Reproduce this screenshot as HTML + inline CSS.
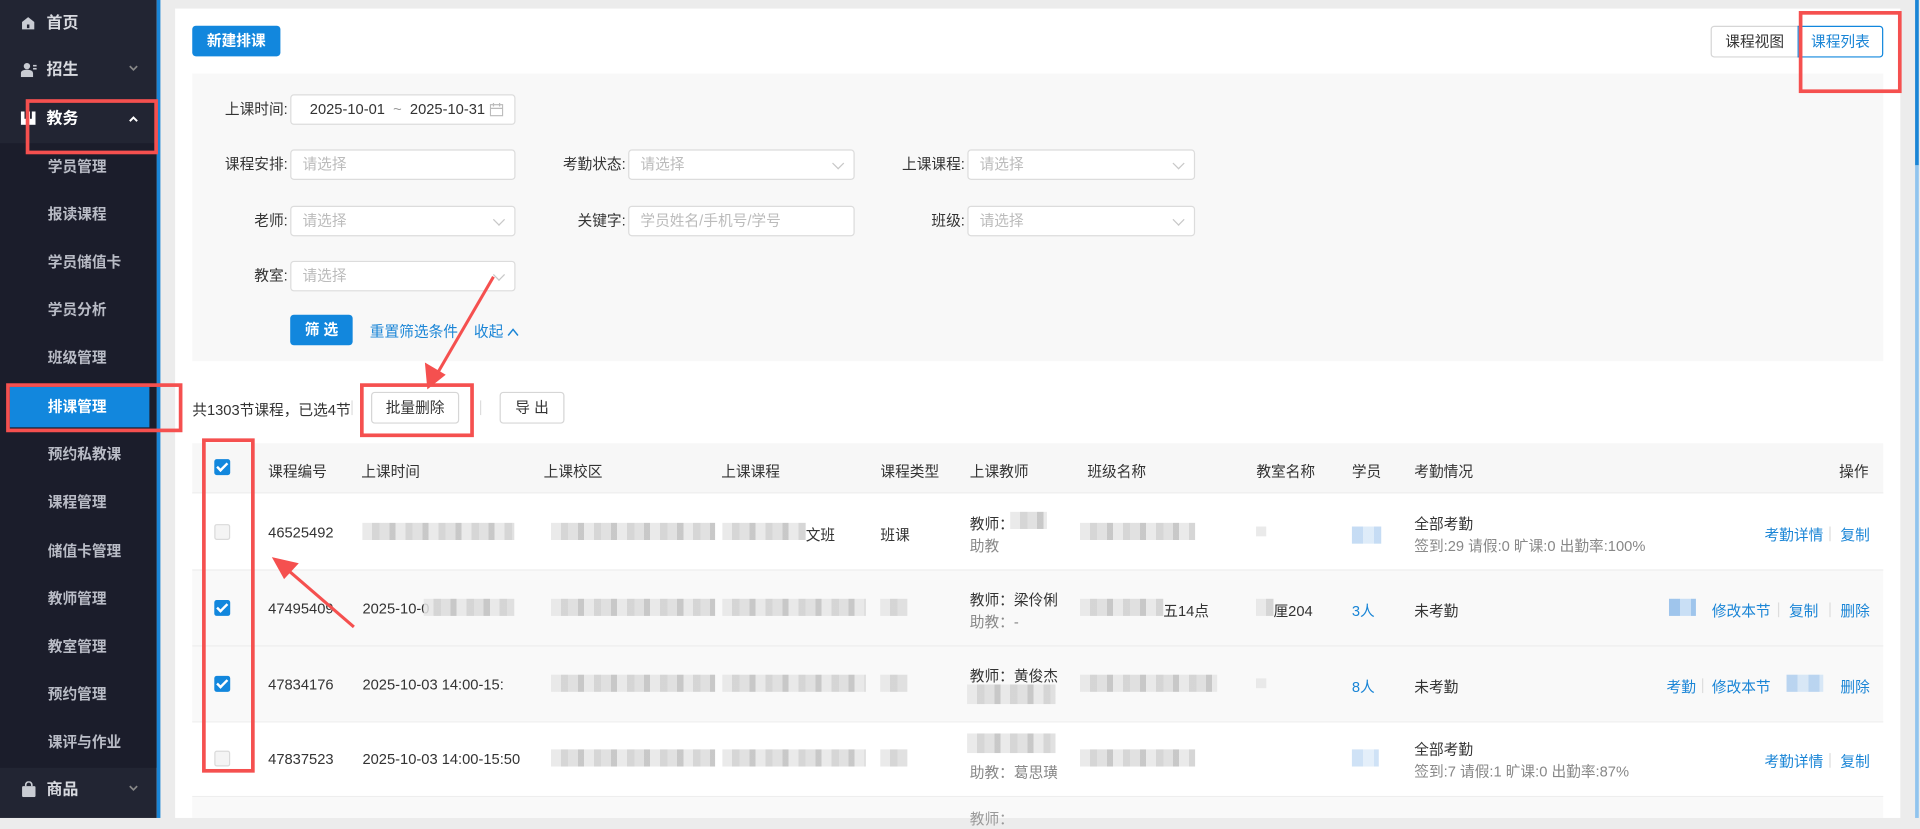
<!DOCTYPE html>
<html><head><meta charset="utf-8"><style>
*{margin:0;padding:0;box-sizing:border-box}
html,body{width:1920px;height:818px;overflow:hidden;background:#ececec}
#w{position:absolute;left:0;top:0;width:1568px;height:668px;transform:scale(1.22449);transform-origin:0 0;font-family:"Liberation Sans","Noto Sans CJK SC",sans-serif;font-size:12px;color:#333}
.a{position:absolute}
.side{left:0;top:0;width:128px;height:668px;background:#222533}
.sub{left:0;top:117px;width:128px;height:510px;background:#1b1d2b}
.mi{position:absolute;left:38px;color:#d8dae0;font-size:13px;font-weight:bold;line-height:16px}
.si{position:absolute;left:39px;color:#b9bcc6;font-size:12px;font-weight:bold;line-height:16px}
.red{position:absolute;border:3px solid #f5504f}
.inp{position:absolute;background:#fff;border:1px solid #dcdcdc;border-radius:3px;height:25px;color:#bbb;font-size:12px;line-height:23px;padding-left:9px}
.inp .ar{position:absolute;right:9px;top:7px;width:7px;height:7px;border-right:1px solid #c8c8c8;border-bottom:1px solid #c8c8c8;transform:rotate(45deg)}
.lb{position:absolute;font-size:12px;color:#333;text-align:right;line-height:25px}
.btn{position:absolute;background:#fff;border:1px solid #d6d6d6;border-radius:3px;text-align:center;font-size:12px;line-height:24px;color:#333}
.cb{position:absolute;left:175px;width:13px;height:13px;border-radius:2px}
.cb.on{background:#1287dd}
.cb.on:after{content:"";position:absolute;left:4px;top:1px;width:3px;height:7px;border:solid #fff;border-width:0 2px 2px 0;transform:rotate(45deg)}
.cb.off{background:#f4f4f4;border:1px solid #dadada}
.th{position:absolute;top:376px;font-size:12px;color:#333}
.t{position:absolute;font-size:12px;color:#333;white-space:nowrap}
.g{color:#888}
.bl{color:#1a85d6}
.bz{position:absolute;height:14px;background:repeating-linear-gradient(90deg,#e6e6e6 0 8px,#cfcfcf 8px 14px,#dcdcdc 14px 22px,#bfbfbf 22px 27px);opacity:.85}
.bb{position:absolute;height:14px;background:repeating-linear-gradient(90deg,#9fc5ec 0 9px,#c9dff5 9px 18px)}
.sep{position:absolute;width:1px;height:12px;background:#ddd}
</style></head><body><div id="w">
<div class="a side"></div><div class="a sub"></div>
<div class="a" style="left:128px;top:0;width:3px;height:668px;background:#1a85d6"></div>
<div class="a" style="left:143px;top:7px;width:1409px;height:661px;background:#fff"></div>
<div class="a" style="left:1552px;top:0;width:12px;height:668px;background:#ececec"></div>
<div class="a" style="left:1564px;top:0;width:3px;height:135px;background:#1a85d6"></div>
<div class="a" style="left:1564px;top:135px;width:3px;height:533px;background:#90c4ee"></div>

<!-- sidebar -->
<svg class="a" style="left:17px;top:13px" width="12" height="12" viewBox="0 0 12 12"><path d="M1 5L6 1l5 4v6H1z" fill="#c9ccd3"/><rect x="5" y="7" width="2" height="3" fill="#222533"/></svg>
<div class="mi" style="top:11px">首页</div>
<svg class="a" style="left:17px;top:51px" width="13" height="12" viewBox="0 0 13 12"><circle cx="5" cy="3" r="2.6" fill="#c9ccd3"/><path d="M0 12v-3c0-2 2-3 5-3s5 1 5 3v3z" fill="#c9ccd3"/><rect x="10" y="2" width="3" height="1.3" fill="#c9ccd3"/><rect x="10" y="4.5" width="3" height="1.3" fill="#c9ccd3"/></svg>
<div class="mi" style="top:49px">招生</div>
<svg class="a" style="left:105px;top:53px" width="8" height="6"><path d="M1 1l3 3 3-3" stroke="#888" stroke-width="1.4" fill="none"/></svg>
<svg class="a" style="left:17px;top:91px" width="12" height="11"><rect x="0" y="0" width="12" height="11" fill="#fff"/><rect x="3" y="0" width="1.5" height="6" fill="#222533"/><rect x="7.5" y="0" width="1.5" height="6" fill="#222533"/></svg>
<div class="mi" style="top:89px;color:#fff">教务</div>
<svg class="a" style="left:105px;top:94px" width="8" height="6"><path d="M1 5l3-3 3 3" stroke="#fff" stroke-width="1.6" fill="none"/></svg>
<div class="si" style="top:128px">学员管理</div>
<div class="si" style="top:167px">报读课程</div>
<div class="si" style="top:206px">学员储值卡</div>
<div class="si" style="top:245px">学员分析</div>
<div class="si" style="top:284px">班级管理</div>
<div class="a" style="left:8px;top:316px;width:114px;height:33px;background:#1287dd"></div>
<div class="si" style="top:324px;color:#fff">排课管理</div>
<div class="si" style="top:363px">预约私教课</div>
<div class="si" style="top:402px">课程管理</div>
<div class="si" style="top:442px">储值卡管理</div>
<div class="si" style="top:481px">教师管理</div>
<div class="si" style="top:520px">教室管理</div>
<div class="si" style="top:559px">预约管理</div>
<div class="si" style="top:598px">课评与作业</div>
<svg class="a" style="left:18px;top:638px" width="11" height="13"><path d="M3 4V3a2.5 2.5 0 015 0v1" stroke="#c9ccd3" stroke-width="1.3" fill="none"/><rect x="0" y="4" width="11" height="9" rx="1" fill="#c9ccd3"/></svg>
<div class="mi" style="top:637px">商品</div>
<svg class="a" style="left:105px;top:641px" width="8" height="6"><path d="M1 1l3 3 3-3" stroke="#888" stroke-width="1.4" fill="none"/></svg>

<!-- top -->
<div class="a" style="left:157px;top:21px;width:72px;height:25px;background:#1287dd;border-radius:3px;color:#fff;font-weight:bold;text-align:center;line-height:25px">新建排课</div>
<div class="btn" style="left:1397px;top:21px;width:72px;height:26px;border-radius:3px 0 0 3px">课程视图</div>
<div class="btn" style="left:1468px;top:21px;width:70px;height:26px;border-color:#1287dd;color:#1a85d6;border-radius:0 3px 3px 0">课程列表</div>

<!-- filter -->
<div class="a" style="left:157px;top:60px;width:1381px;height:235px;background:#f8f8f8"></div>
<div class="lb" style="left:160px;top:77px;width:75px">上课时间:</div>
<div class="inp" style="left:237px;top:77px;width:184px;color:#333;padding-left:15px">2025-10-01 &nbsp;<span style="color:#999">~</span>&nbsp; 2025-10-31
<svg class="a" style="right:9px;top:6px" width="11" height="11"><rect x=".5" y="1.5" width="10" height="9" fill="none" stroke="#bbb"/><path d="M.5 4.5h10M3 0v3M8 0v3" stroke="#bbb"/></svg></div>
<div class="lb" style="left:160px;top:122px;width:75px">课程安排:</div>
<div class="inp" style="left:237px;top:122px;width:184px">请选择</div>
<div class="lb" style="left:430px;top:122px;width:81px">考勤状态:</div>
<div class="inp" style="left:513px;top:122px;width:185px">请选择<span class="ar"></span></div>
<div class="lb" style="left:707px;top:122px;width:81px">上课课程:</div>
<div class="inp" style="left:790px;top:122px;width:186px">请选择<span class="ar"></span></div>
<div class="lb" style="left:160px;top:168px;width:75px">老师:</div>
<div class="inp" style="left:237px;top:168px;width:184px">请选择<span class="ar"></span></div>
<div class="lb" style="left:430px;top:168px;width:81px">关键字:</div>
<div class="inp" style="left:513px;top:168px;width:185px">学员姓名/手机号/学号</div>
<div class="lb" style="left:707px;top:168px;width:81px">班级:</div>
<div class="inp" style="left:790px;top:168px;width:186px">请选择<span class="ar"></span></div>
<div class="lb" style="left:160px;top:213px;width:75px">教室:</div>
<div class="inp" style="left:237px;top:213px;width:184px">请选择<span class="ar"></span></div>
<div class="a" style="left:237px;top:257px;width:51px;height:25px;background:#1287dd;border-radius:3px;color:#fff;font-weight:bold;text-align:center;line-height:25px">筛 选</div>
<div class="t bl" style="left:302px;top:262px">重置筛选条件</div>
<div class="t bl" style="left:387px;top:262px">收起 <svg width="10" height="7"><path d="M1 6l4-5 4 5" stroke="#1a85d6" stroke-width="1.2" fill="none"/></svg></div>

<!-- toolbar -->
<div class="t" style="left:157px;top:326px">共1303节课程，已选4节</div>
<div class="sep" style="left:287px;top:327px"></div>
<div class="btn" style="left:303px;top:320px;width:72px;height:26px">批量删除</div>
<div class="sep" style="left:392px;top:327px"></div>
<div class="btn" style="left:408px;top:320px;width:53px;height:26px">导 出</div>

<!-- table -->
<div class="a" style="left:157px;top:362px;width:1381px;height:41px;background:#f7f7f7;border-bottom:1px solid #eee"></div>
<div class="a" style="left:157px;top:465px;width:1381px;height:124px;background:#f9f9f9"></div>
<div class="a" style="left:157px;top:465px;width:1381px;height:1px;background:#eee"></div>
<div class="a" style="left:157px;top:527px;width:1381px;height:1px;background:#eee"></div>
<div class="a" style="left:157px;top:589px;width:1381px;height:1px;background:#eee"></div>
<div class="a" style="left:157px;top:650px;width:1381px;height:1px;background:#eee"></div>
<div class="a" style="left:157px;top:651px;width:1381px;height:17px;background:#f9f9f9"></div>
<div class="cb on" style="top:375px"></div>
<div class="th" style="left:219px">课程编号</div><div class="th" style="left:295px">上课时间</div><div class="th" style="left:444px">上课校区</div><div class="th" style="left:589px">上课课程</div><div class="th" style="left:719px">课程类型</div><div class="th" style="left:792px">上课教师</div><div class="th" style="left:888px">班级名称</div><div class="th" style="left:1026px">教室名称</div><div class="th" style="left:1104px">学员</div><div class="th" style="left:1155px">考勤情况</div><div class="th" style="left:1502px">操作</div>

<!-- row1 -->
<div class="cb off" style="top:428px"></div>
<div class="t" style="left:219px;top:428px">46525492</div>
<div class="bz" style="left:296px;top:427px;width:124px"></div>
<div class="bz" style="left:450px;top:427px;width:134px"></div>
<div class="bz" style="left:590px;top:427px;width:68px"></div><div class="t" style="left:658px;top:428px">文班</div>
<div class="t" style="left:719px;top:428px">班课</div>
<div class="t" style="left:792px;top:419px">教师：</div><div class="bz" style="left:825px;top:418px;width:30px"></div>
<div class="t g" style="left:792px;top:437px">助教</div>
<div class="bz" style="left:882px;top:427px;width:94px"></div>
<div class="bz" style="left:1026px;top:430px;width:8px;height:8px"></div>
<div class="bb" style="left:1104px;top:430px;width:24px;opacity:.6"></div>
<div class="t" style="left:1155px;top:419px">全部考勤</div>
<div class="t g" style="left:1155px;top:437px">签到:29 请假:0 旷课:0 出勤率:100%</div>
<div class="t bl" style="left:1441px;top:428px">考勤详情</div><div class="sep" style="left:1494px;top:430px"></div><div class="t bl" style="left:1503px;top:428px">复制</div>

<!-- row2 -->
<div class="cb on" style="top:490px"></div>
<div class="t" style="left:219px;top:490px">47495409</div>
<div class="t" style="left:296px;top:490px">2025-10-0</div><div class="bz" style="left:346px;top:489px;width:74px"></div>
<div class="bz" style="left:450px;top:489px;width:134px"></div>
<div class="bz" style="left:590px;top:489px;width:117px"></div>
<div class="bz" style="left:719px;top:489px;width:22px"></div>
<div class="t" style="left:792px;top:481px">教师：梁伶俐</div>
<div class="t g" style="left:792px;top:499px">助教：-</div>
<div class="bz" style="left:882px;top:489px;width:68px"></div><div class="t" style="left:950px;top:490px">五14点</div>
<div class="bz" style="left:1026px;top:489px;width:14px"></div><div class="t" style="left:1040px;top:490px">厘204</div>
<div class="t bl" style="left:1104px;top:490px">3人</div>
<div class="t" style="left:1155px;top:490px">未考勤</div>
<div class="bb" style="left:1363px;top:489px;width:22px"></div>
<div class="t bl" style="left:1398px;top:490px">修改本节</div><div class="sep" style="left:1452px;top:492px"></div>
<div class="t bl" style="left:1461px;top:490px">复制</div><div class="sep" style="left:1494px;top:492px"></div>
<div class="t bl" style="left:1503px;top:490px">删除</div>

<!-- row3 -->
<div class="cb on" style="top:552px"></div>
<div class="t" style="left:219px;top:552px">47834176</div>
<div class="t" style="left:296px;top:552px">2025-10-03 14:00-15:</div>
<div class="bz" style="left:450px;top:551px;width:134px"></div>
<div class="bz" style="left:590px;top:551px;width:117px"></div>
<div class="bz" style="left:719px;top:551px;width:22px"></div>
<div class="t" style="left:792px;top:543px">教师：黄俊杰</div>
<div class="bz" style="left:790px;top:559px;width:72px;height:16px"></div>
<div class="bz" style="left:882px;top:551px;width:112px"></div>
<div class="bz" style="left:1026px;top:554px;width:8px;height:8px"></div>
<div class="t bl" style="left:1104px;top:552px">8人</div>
<div class="t" style="left:1155px;top:552px">未考勤</div>
<div class="t bl" style="left:1361px;top:552px">考勤</div><div class="sep" style="left:1390px;top:554px"></div>
<div class="t bl" style="left:1398px;top:552px">修改本节</div>
<div class="bb" style="left:1459px;top:551px;width:30px;opacity:.7"></div>
<div class="t bl" style="left:1503px;top:552px">删除</div>

<!-- row4 -->
<div class="cb off" style="top:613px"></div>
<div class="t" style="left:219px;top:613px">47837523</div>
<div class="t" style="left:296px;top:613px">2025-10-03 14:00-15:50</div>
<div class="bz" style="left:450px;top:612px;width:134px"></div>
<div class="bz" style="left:590px;top:612px;width:117px"></div>
<div class="bz" style="left:719px;top:612px;width:22px"></div>
<div class="bz" style="left:790px;top:599px;width:72px;height:16px"></div>
<div class="t g" style="left:792px;top:622px">助教：葛思璜</div>
<div class="bz" style="left:882px;top:612px;width:94px"></div>
<div class="bb" style="left:1104px;top:612px;width:22px;opacity:.5"></div>
<div class="t" style="left:1155px;top:603px">全部考勤</div>
<div class="t g" style="left:1155px;top:621px">签到:7 请假:1 旷课:0 出勤率:87%</div>
<div class="t bl" style="left:1441px;top:613px">考勤详情</div><div class="sep" style="left:1494px;top:615px"></div><div class="t bl" style="left:1503px;top:613px">复制</div>
<div class="t" style="left:792px;top:660px;color:#999">教师：</div>

<!-- annotations -->
<div class="red" style="left:21px;top:81px;width:108px;height:45px"></div>
<div class="red" style="left:5px;top:313px;width:144px;height:40px"></div>
<div class="red" style="left:294px;top:313px;width:93px;height:44px"></div>
<div class="red" style="left:165px;top:358px;width:43px;height:273px"></div>
<div class="red" style="left:1469px;top:9px;width:84px;height:67px"></div>
<svg class="a" style="left:0;top:0" width="1568" height="668">
<path d="M403 226L356 307" stroke="#f5504f" stroke-width="2.5"/><path d="M349 318L347 296L364 306z" fill="#f5504f"/>
<path d="M289 512L231 462" stroke="#f5504f" stroke-width="2.5"/><path d="M222 455L244 460L232 473z" fill="#f5504f"/>
</svg>
</div></body></html>
